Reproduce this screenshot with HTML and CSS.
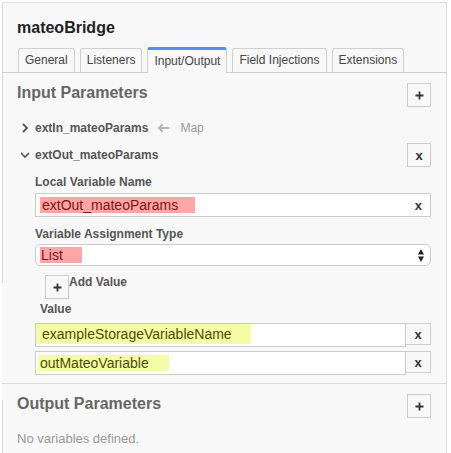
FILE: index.html
```html
<!DOCTYPE html>
<html>
<head>
<meta charset="utf-8">
<link rel="stylesheet" href="styles.css">
</head>
<body>
<div class="panel">
  <div class="head">
    <div class="title">mateoBridge</div>
    <div class="tabs">
      <div class="tab">General</div>
      <div class="tab">Listeners</div>
      <div class="tab active">Input/Output</div>
      <div class="tab">Field Injections</div>
      <div class="tab">Extensions</div>
    </div>
  </div>

  <div class="section input-section">
    <div class="sec-head">
      <div class="sec-title">Input Parameters</div>
      <div class="btn"><svg width="9" height="9" viewBox="0 0 9 9"><path d="M4.5 0.5v8M0.5 4.5h8" stroke="#333" stroke-width="1.8"/></svg></div>
    </div>

    <div class="entry-row first">
      <svg class="chev" width="10" height="10" viewBox="0 0 10 10"><path d="M3 1l4 4-4 4" fill="none" stroke="#555" stroke-width="1.8"/></svg>
      <span class="entry-name">extIn_mateoParams</span>
      <svg class="arrow" width="12" height="10" viewBox="0 0 12 10"><path d="M12 5H2M5.5 1.5L2 5l3.5 3.5" fill="none" stroke="#b5b5b5" stroke-width="2"/></svg>
      <span class="map">Map</span>
    </div>

    <div class="entry-row open">
      <svg class="chev" width="10" height="10" viewBox="0 0 10 10"><path d="M1 3l4 4 4-4" fill="none" stroke="#555" stroke-width="1.6"/></svg>
      <span class="entry-name">extOut_mateoParams</span>
      <span class="spacer"></span>
      <div class="btn"><span class="x">x</span></div>
    </div>

    <div class="entry-body">
      <div class="label l-first">Local Variable Name</div>
      <div class="field">
        <span class="hl-red name-hl">extOut_mateoParams</span>
        <span class="spacer"></span>
        <span class="x">x</span>
      </div>

      <div class="label l-second">Variable Assignment Type</div>
      <div class="select">
        <span class="hl-red list-hl">List</span>
        <span class="spacer"></span>
        <svg width="6" height="13" viewBox="0 0 6 13"><path d="M0 5.5L3 0l3 5.5zM0 7.5L3 13l3-5.5z" fill="#222"/></svg>
      </div>

      <div class="add-row">
        <div class="btn"><svg width="9" height="9" viewBox="0 0 9 9"><path d="M4.5 0.5v8M0.5 4.5h8" stroke="#333" stroke-width="1.8"/></svg></div>
        <span class="add-label">Add Value</span>
      </div>

      <div class="label value-label">Value</div>

      <div class="value-list">
        <div class="value-row">
          <div class="vfield"><span class="hl-yellow y1">exampleStorageVariableName</span></div>
          <div class="vbtn"><span class="x">x</span></div>
        </div>
        <div class="value-row">
          <div class="vfield center"><span class="hl-yellow y2">outMateoVariable</span></div>
          <div class="vbtn"><span class="x">x</span></div>
        </div>
      </div>
    </div>
  </div>

  <div class="section output-section">
    <div class="sec-head">
      <div class="sec-title">Output Parameters</div>
      <div class="btn"><svg width="9" height="9" viewBox="0 0 9 9"><path d="M4.5 0.5v8M0.5 4.5h8" stroke="#333" stroke-width="1.8"/></svg></div>
    </div>
    <div class="empty">No variables defined.</div>
  </div>
</div>
</body>
</html>
```

FILE: styles.css
```css
* { box-sizing: border-box; }

body {
  margin: 0;
  background: #ffffff;
  font-family: "Liberation Sans", Arial, Helvetica, sans-serif;
  color: #333;
}

.panel {
  margin: 2px 0 0 2px;
  width: 445px;
  height: 451px;
  border-top: 1px solid #dcdcdc;
  border-right: 1px solid #dcdcdc;
  background:
    linear-gradient(#dcdcdc, #dcdcdc) no-repeat 0 0 / 1px 280px,
    linear-gradient(#dcdcdc, #dcdcdc) no-repeat 0 397px / 1px 100px,
    #f8f8f8;
  overflow: hidden;
}

.head {
  padding: 15px 0 0 15px;
}

.title {
  font-size: 16px;
  font-weight: bold;
  line-height: 20px;
  color: #222;
}

.tabs {
  display: flex;
  align-items: flex-end;
  gap: 5px;
  margin-top: 9px;
  margin-left: -15px;
  padding-left: 16px;
  border-bottom: 1px solid #cfcfcf;
  height: 26px;
}

.tab {
  height: 24px;
  padding: 0 6px;
  border: 1px solid #cfcfcf;
  border-bottom: none;
  border-radius: 3px 3px 0 0;
  font-size: 12px;
  line-height: 22px;
  color: #444;
  background: #f8f8f8;
}

.tab.active {
  height: 26px;
  margin-bottom: -1px;
  border-top: 3px solid #4d92f0;
  line-height: 23px;
}

.section {
  padding: 0 15px 0 15px;
}

.sec-head {
  display: flex;
  justify-content: space-between;
  align-items: flex-start;
  margin-top: 10px;
}

.sec-title {
  font-size: 16px;
  font-weight: bold;
  line-height: 20px;
  color: #666;
}

.btn {
  width: 24px;
  height: 24px;
  border: 1px solid #cccccc;
  background: #f8f8f8;
  display: flex;
  align-items: center;
  justify-content: center;
  flex: none;
}

.x {
  font-size: 13px;
  font-weight: bold;
  color: #333;
  line-height: 13px;
}

.entry-row {
  display: flex;
  align-items: center;
  padding-left: 3px;
}

.entry-row.first {
  margin-top: 11px;
  height: 20px;
}

.entry-row.open {
  margin-top: 5px;
  height: 24px;
}

.chev { flex: none; margin-right: 5px; }

.entry-name {
  font-size: 12px;
  font-weight: bold;
  color: #555;
  line-height: 14px;
}

.arrow { margin: 0 11px 0 9px; }

.map {
  font-size: 12px;
  color: #999;
  line-height: 14px;
}

.spacer { flex: 1; }

.entry-body {
  margin-left: 18px;
}

.label {
  font-size: 12px;
  font-weight: bold;
  color: #555;
  line-height: 14px;
}

.l-first { margin-top: 8px; }
.l-second { margin-top: 10px; }

.field {
  margin-top: 4px;
  height: 24px;
  background: #fff;
  border: 1px solid #cccccc;
  display: flex;
  align-items: center;
  padding: 0 8px 0 4px;
}

.hl-red {
  background: #ffa6a6;
  color: #7a1414;
  font-size: 14px;
  line-height: 16px;
}

.name-hl { padding: 0 17px 0 2px; }

.select {
  margin-top: 3px;
  height: 22px;
  background: #fff;
  border: 1px solid #cccccc;
  border-radius: 5px;
  display: flex;
  align-items: center;
  padding: 0 6px 0 4px;
}

.list-hl { padding: 0 19px 0 1px; }

.add-row {
  display: flex;
  align-items: flex-start;
  margin-top: 9px;
  margin-left: 10px;
}

.add-label {
  font-size: 12px;
  font-weight: bold;
  color: #555;
  line-height: 14px;
}

.value-label {
  margin-top: 3px;
  margin-left: 5px;
}

.value-list {
  margin-top: 7px;
  display: flex;
  flex-direction: column;
  gap: 4px;
}

.value-row {
  display: flex;
  align-items: flex-start;
}

.vfield {
  flex: 1;
  height: 24px;
  background: #fff;
  border: 1px solid #cccccc;
  display: flex;
  align-items: flex-start;
}

.vfield.center { align-items: center; }

.vbtn {
  width: 25px;
  height: 22px;
  border: 1px solid #cccccc;
  border-left: none;
  background: #f8f8f8;
  display: flex;
  align-items: center;
  justify-content: center;
}

.hl-yellow {
  background: #f5fca6;
  color: #4d4d00;
  font-size: 14px;
  line-height: 16px;
}

.y1 { padding: 2px 19px 2px 6px; }
.y2 { padding: 0 20px 0 2px; margin-left: 2px; }

.output-section {
  margin-top: 8px;
  border-top: 1px solid #dcdcdc;
}

.output-section .sec-head { margin-top: 10px; }

.empty {
  margin-top: 13px;
  font-size: 13px;
  line-height: 16px;
  color: #999;
}
```
